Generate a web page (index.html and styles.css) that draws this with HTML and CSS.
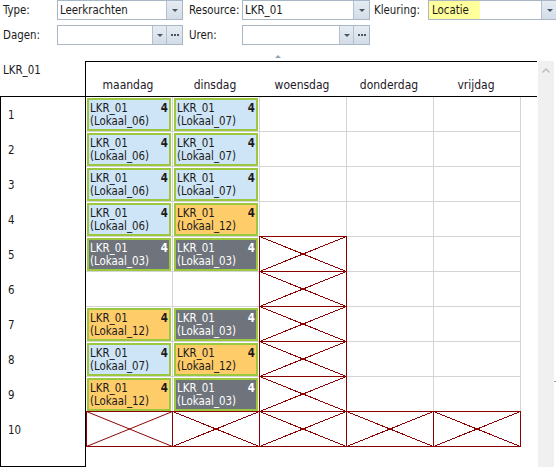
FILE: index.html
```html
<!DOCTYPE html>
<html>
<head>
<meta charset="utf-8">
<link rel="stylesheet" href="styles.css">
</head>
<body>
<div class="toolbar">
  <div class="trow">
    <span class="lbl l1">Type:</span>
    <div class="combo c1"><span class="val">Leerkrachten</span><span class="btn"><i class="tri"></i></span></div>
    <span class="lbl l2">Resource:</span>
    <div class="combo c2"><span class="val">LKR_01</span><span class="btn"><i class="tri"></i></span></div>
    <span class="lbl l3">Kleuring:</span>
    <div class="combo c3"><span class="val"><span class="hl">Locatie</span></span><span class="btn"><i class="tri"></i></span></div>
  </div>
  <div class="trow r2">
    <span class="lbl l1">Dagen:</span>
    <div class="combo c1"><span class="val"></span><span class="btn narrow"><i class="tri"></i></span><span class="btn dots"><svg width="8" height="2" viewBox="0 0 8 2"><rect x="0" y="0" width="2" height="2"/><rect x="3" y="0" width="2" height="2"/><rect x="6" y="0" width="2" height="2"/></svg></span></div>
    <span class="lbl l2">Uren:</span>
    <div class="combo c2"><span class="val"></span><span class="btn narrow"><i class="tri"></i></span><span class="btn dots"><svg width="8" height="2" viewBox="0 0 8 2"><rect x="0" y="0" width="2" height="2"/><rect x="3" y="0" width="2" height="2"/><rect x="6" y="0" width="2" height="2"/></svg></span></div>
  </div>
  <div class="splitter"><i></i></div>
</div>

<div class="main">
  <div class="corner">LKR_01</div>
  <div class="days">
    <span>maandag</span><span>dinsdag</span><span>woensdag</span><span>donderdag</span><span>vrijdag</span>
  </div>
  <div class="heads">
    <div class="h">1</div><div class="h">2</div><div class="h">3</div><div class="h">4</div><div class="h">5</div>
    <div class="h">6</div><div class="h">7</div><div class="h">8</div><div class="h">9</div><div class="h">10</div>
  </div>
  <div class="body">
    <!-- row 1 -->
    <div class="cell"><div class="appt blue"><div class="top"><span>LKR_01</span><b>4</b></div><div>(Lokaal_06)</div></div></div>
    <div class="cell"><div class="appt blue"><div class="top"><span>LKR_01</span><b>4</b></div><div>(Lokaal_07)</div></div></div>
    <div class="cell"></div><div class="cell"></div><div class="cell"></div>
    <!-- row 2 -->
    <div class="cell"><div class="appt blue"><div class="top"><span>LKR_01</span><b>4</b></div><div>(Lokaal_06)</div></div></div>
    <div class="cell"><div class="appt blue"><div class="top"><span>LKR_01</span><b>4</b></div><div>(Lokaal_07)</div></div></div>
    <div class="cell"></div><div class="cell"></div><div class="cell"></div>
    <!-- row 3 -->
    <div class="cell"><div class="appt blue"><div class="top"><span>LKR_01</span><b>4</b></div><div>(Lokaal_06)</div></div></div>
    <div class="cell"><div class="appt blue"><div class="top"><span>LKR_01</span><b>4</b></div><div>(Lokaal_07)</div></div></div>
    <div class="cell"></div><div class="cell"></div><div class="cell"></div>
    <!-- row 4 -->
    <div class="cell"><div class="appt blue"><div class="top"><span>LKR_01</span><b>4</b></div><div>(Lokaal_06)</div></div></div>
    <div class="cell"><div class="appt orange"><div class="top"><span>LKR_01</span><b>4</b></div><div>(Lokaal_12)</div></div></div>
    <div class="cell"></div><div class="cell"></div><div class="cell"></div>
    <!-- row 5 -->
    <div class="cell"><div class="appt gray"><div class="top"><span>LKR_01</span><b>4</b></div><div>(Lokaal_03)</div></div></div>
    <div class="cell"><div class="appt gray"><div class="top"><span>LKR_01</span><b>4</b></div><div>(Lokaal_03)</div></div></div>
    <div class="cell x"><svg viewBox="0 0 88 36" preserveAspectRatio="none"><rect x="0.5" y="0.5" width="87" height="35"/><line x1="0.5" y1="0.5" x2="87.5" y2="35.5"/><line x1="87.5" y1="0.5" x2="0.5" y2="35.5"/></svg></div>
    <div class="cell"></div><div class="cell"></div>
    <!-- row 6 -->
    <div class="cell"></div><div class="cell"></div>
    <div class="cell x"><svg viewBox="0 0 88 36" preserveAspectRatio="none"><rect x="0.5" y="0.5" width="87" height="35"/><line x1="0.5" y1="0.5" x2="87.5" y2="35.5"/><line x1="87.5" y1="0.5" x2="0.5" y2="35.5"/></svg></div>
    <div class="cell"></div><div class="cell"></div>
    <!-- row 7 -->
    <div class="cell"><div class="appt orange"><div class="top"><span>LKR_01</span><b>4</b></div><div>(Lokaal_12)</div></div></div>
    <div class="cell"><div class="appt gray"><div class="top"><span>LKR_01</span><b>4</b></div><div>(Lokaal_03)</div></div></div>
    <div class="cell x"><svg viewBox="0 0 88 36" preserveAspectRatio="none"><rect x="0.5" y="0.5" width="87" height="35"/><line x1="0.5" y1="0.5" x2="87.5" y2="35.5"/><line x1="87.5" y1="0.5" x2="0.5" y2="35.5"/></svg></div>
    <div class="cell"></div><div class="cell"></div>
    <!-- row 8 -->
    <div class="cell"><div class="appt blue"><div class="top"><span>LKR_01</span><b>4</b></div><div>(Lokaal_07)</div></div></div>
    <div class="cell"><div class="appt orange"><div class="top"><span>LKR_01</span><b>4</b></div><div>(Lokaal_12)</div></div></div>
    <div class="cell x"><svg viewBox="0 0 88 36" preserveAspectRatio="none"><rect x="0.5" y="0.5" width="87" height="35"/><line x1="0.5" y1="0.5" x2="87.5" y2="35.5"/><line x1="87.5" y1="0.5" x2="0.5" y2="35.5"/></svg></div>
    <div class="cell"></div><div class="cell"></div>
    <!-- row 9 -->
    <div class="cell"><div class="appt orange"><div class="top"><span>LKR_01</span><b>4</b></div><div>(Lokaal_12)</div></div></div>
    <div class="cell"><div class="appt gray"><div class="top"><span>LKR_01</span><b>4</b></div><div>(Lokaal_03)</div></div></div>
    <div class="cell x"><svg viewBox="0 0 88 36" preserveAspectRatio="none"><rect x="0.5" y="0.5" width="87" height="35"/><line x1="0.5" y1="0.5" x2="87.5" y2="35.5"/><line x1="87.5" y1="0.5" x2="0.5" y2="35.5"/></svg></div>
    <div class="cell"></div><div class="cell"></div>
    <!-- row 10 -->
    <div class="cell x first"><svg viewBox="0 0 88 36" preserveAspectRatio="none"><rect x="0.5" y="0.5" width="87" height="35"/><line x1="0.5" y1="0.5" x2="87.5" y2="35.5"/><line x1="87.5" y1="0.5" x2="0.5" y2="35.5"/></svg></div>
    <div class="cell x"><svg viewBox="0 0 88 36" preserveAspectRatio="none"><rect x="0.5" y="0.5" width="87" height="35"/><line x1="0.5" y1="0.5" x2="87.5" y2="35.5"/><line x1="87.5" y1="0.5" x2="0.5" y2="35.5"/></svg></div>
    <div class="cell x"><svg viewBox="0 0 88 36" preserveAspectRatio="none"><rect x="0.5" y="0.5" width="87" height="35"/><line x1="0.5" y1="0.5" x2="87.5" y2="35.5"/><line x1="87.5" y1="0.5" x2="0.5" y2="35.5"/></svg></div>
    <div class="cell x"><svg viewBox="0 0 88 36" preserveAspectRatio="none"><rect x="0.5" y="0.5" width="87" height="35"/><line x1="0.5" y1="0.5" x2="87.5" y2="35.5"/><line x1="87.5" y1="0.5" x2="0.5" y2="35.5"/></svg></div>
    <div class="cell x"><svg viewBox="0 0 88 36" preserveAspectRatio="none"><rect x="0.5" y="0.5" width="87" height="35"/><line x1="0.5" y1="0.5" x2="87.5" y2="35.5"/><line x1="87.5" y1="0.5" x2="0.5" y2="35.5"/></svg></div>
  </div>
  <div class="scroll"><svg width="8" height="5" viewBox="0 0 8 5"><polyline points="0.5,4.5 4,1 7.5,4.5" fill="none" stroke="#bdbdbd" stroke-width="1.4"/></svg></div>
  <div class="edge"><i></i></div>
</div>
</body>
</html>
```

FILE: styles.css
```css
* { box-sizing: border-box; }

body {
  margin: 0;
  width: 556px;
  height: 467px;
  overflow: hidden;
  background: #fff;
  font-family: "DejaVu Sans Condensed", "DejaVu Sans", "Liberation Sans", sans-serif;
  font-size: 11.4px;
  color: #1b1b1b;
}

/* ---------- toolbar ---------- */
.toolbar { height: 61px; }

.trow {
  display: flex;
  align-items: center;
  height: 20px;
}
.trow.r2 { margin-top: 5px; }

.lbl { flex: none; white-space: nowrap; }
.l1 { width: 57px; padding-left: 3px; }
.l2 { width: 59px; padding-left: 6px; }
.l3 { width: 58px; padding-left: 4px; }

.combo {
  flex: none;
  display: flex;
  height: 20px;
  border: 1px solid #a9b6c6;
  background: #fff;
}
.c1 { width: 126px; }
.c2 { width: 128px; }
.c3 { width: 130px; }

.val {
  flex: 1;
  padding-left: 2px;
  line-height: 18px;
  white-space: nowrap;
  overflow: hidden;
}
.hl {
  display: inline-block;
  height: 18px;
  margin-left: -2px;
  padding: 0 11px 0 3px;
  background: #ffff9c;
}

.btn {
  flex: none;
  width: 16px;
  border-left: 1px solid #b4c0cf;
  background: linear-gradient(#e6ecf3, #d3dce7);
  display: flex;
  align-items: center;
  justify-content: center;
}
.btn.narrow { width: 14px; }
.btn svg { fill: #4d5563; }

.tri {
  display: block;
  width: 0;
  height: 0;
  border-left: 3px solid transparent;
  border-right: 3px solid transparent;
  border-top: 3px solid #4d5563;
}

.splitter {
  margin-top: 10px;
  padding-left: 275px;
  height: 4px;
}
.splitter i {
  display: block;
  width: 0;
  height: 0;
  border-left: 3px solid transparent;
  border-right: 3px solid transparent;
  border-bottom: 3px solid #8fa3b8;
}

/* ---------- schedule ---------- */
.main {
  display: grid;
  grid-template-columns: 85px 452px 1px 16px 2px;
  grid-template-rows: 35px 371px;
}

.corner {
  grid-column: 1;
  grid-row: 1;
  padding: 3px 0 0 3px;
  line-height: 13px;
}

.days {
  grid-column: 2;
  grid-row: 1;
  border-top: 1px solid #000;
  border-left: 1px solid #000;
  display: grid;
  grid-template-columns: repeat(5, 87px);
  align-items: end;
  padding-bottom: 4px;
  font-size: 12px;
  line-height: 14px;
  color: #1d1626;
}
.days span { text-align: center; padding-right: 3px; }

.heads {
  grid-column: 1;
  grid-row: 2;
  border: 1px solid #000;
  border-right: none;
}
.heads .h {
  height: 35px;
  display: flex;
  align-items: center;
  padding-left: 7px;
}

.body {
  grid-column: 2;
  grid-row: 2;
  border-top: 1px solid #000;
  border-left: 1px solid #000;
  display: grid;
  grid-template-columns: repeat(5, 87px);
  grid-template-rows: repeat(10, 35px);
  align-content: start;
}

.cell {
  position: relative;
  border-right: 1px solid #d4d4d4;
  border-bottom: 1px solid #d4d4d4;
  padding: 1px 1px 0 1px;
}

.appt {
  height: 100%;
  border: 2px solid #9cc83f;
  padding: 2px 1px 0 1px;
  line-height: 13px;
  white-space: nowrap;
}
.appt .top { display: flex; justify-content: space-between; }
.appt b { font-weight: bold; }

.blue { background: #cde5f6; }
.orange { background: #ffcc6a; }
.gray { background: #6f737b; color: #fff; }

.x svg {
  position: absolute;
  left: -1px;
  top: -1px;
  width: 88px;
  height: 36px;
  fill: none;
  stroke: #8b0000;
  stroke-width: 1;
  shape-rendering: crispEdges;
}
.x svg rect { stroke-width: 1.3; }
.x.first svg { left: 0; width: 87px; }

.scroll {
  grid-column: 4;
  grid-row: 1 / span 2;
  background: #f0f0f0;
  display: flex;
  justify-content: center;
  align-items: flex-start;
  padding-top: 7px;
}

.edge {
  grid-column: 5;
  grid-row: 1 / span 2;
  padding-top: 320px;
}
.edge i {
  display: block;
  width: 2px;
  height: 1px;
  background: #7a9bc8;
}
```
